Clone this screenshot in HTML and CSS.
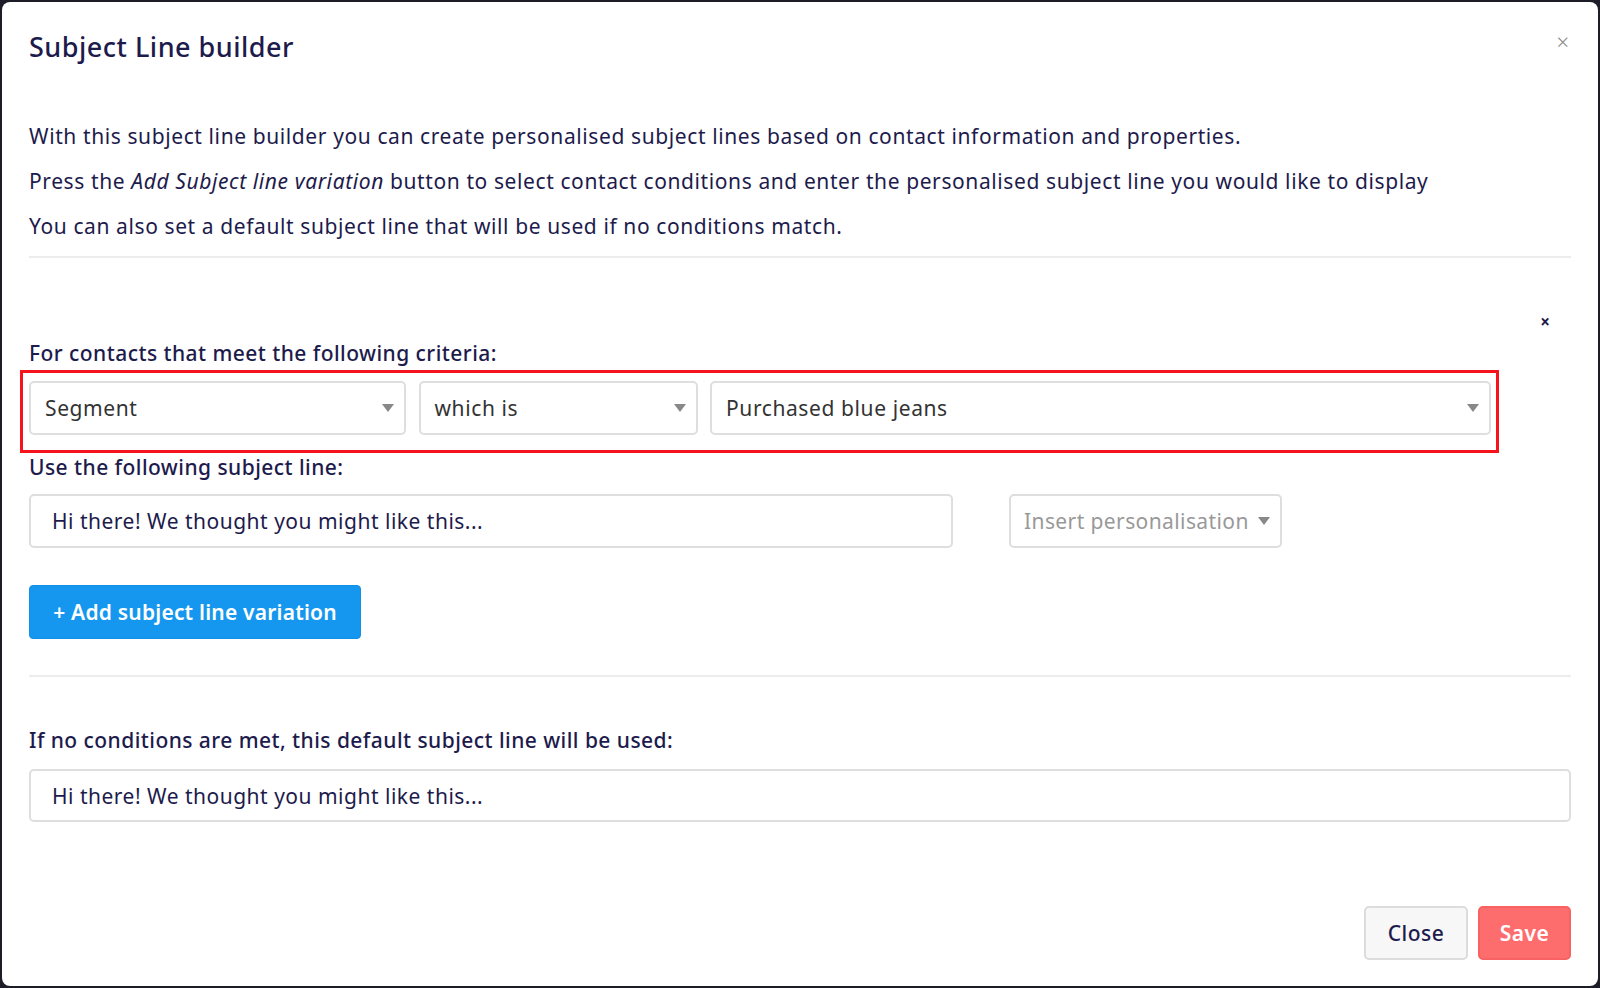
FILE: index.html
```html
<!DOCTYPE html>
<html lang="en">
  <head>
    <meta charset="UTF-8" />
    <meta name="viewport" content="width=device-width, initial-scale=1.0" />
    <title>Subject Line builder</title>
    <link rel="stylesheet" href="styles.css">
  </head>
  <body>
    <div class="modal">
      <div class="modal-header">
        <h1 class="modal-title">Subject Line builder</h1>
        <span class="modal-close">&times;</span>
      </div>

      <div class="intro">
        <p>With this subject line builder you can create personalised subject lines based on contact information and properties.</p>
        <p>Press the <em>Add Subject line variation</em> button to select contact conditions and enter the personalised subject line you would like to display</p>
        <p>You can also set a default subject line that will be used if no conditions match.</p>
      </div>

      <hr class="divider">

      <!-- variation block -->
      <div class="variation">
        <div class="remove-row"><span class="remove">&times;</span></div>
        <div class="label label-criteria">For contacts that meet the following criteria:</div>
        <div class="highlight">
          <div class="criteria">
            <div class="select"><span>Segment</span><i class="caret"></i></div>
            <div class="select"><span>which is</span><i class="caret"></i></div>
            <div class="select"><span>Purchased blue jeans</span><i class="caret"></i></div>
          </div>
        </div>
        <div class="label label-subject">Use the following subject line:</div>
        <div class="subject-row">
          <div class="input">Hi there! We thought you might like this...</div>
          <div class="select select-personal"><span>Insert personalisation</span><i class="caret"></i></div>
        </div>
      </div>

      <button class="btn-add">+ Add subject line variation</button>

      <hr class="divider divider-bottom">

      <div class="label label-default">If no conditions are met, this default subject line will be used:</div>
      <div class="input input-default">Hi there! We thought you might like this...</div>

      <div class="modal-footer">
        <button class="btn btn-close">Close</button>
        <button class="btn btn-save">Save</button>
      </div>
    </div>
  </body>
</html>
```

FILE: styles.css
```css
html, body {
  margin: 0;
  height: 100%;
}

body {
  background: #1d1d28;
  font-family: "Noto Sans", "Open Sans", sans-serif;
  color: #1d1b4c;
  padding: 2px;
  box-sizing: border-box;
  overflow: hidden;
}

.modal {
  background: #fff;
  border-radius: 8px;
  height: 984px;
  width: 1596px;
  box-sizing: border-box;
  padding: 29px 27px 0 27px;
}

.modal-header {
  display: flex;
  justify-content: space-between;
  align-items: flex-start;
}

.modal-title {
  margin: 0;
  font-size: 27px;
  line-height: 32px;
  font-weight: 500;
  letter-spacing: 0.5px;
}

.modal-close {
  color: #8a8a8a;
  font-size: 22px;
  line-height: 22px;
  margin-top: -1px;
  margin-right: 2px;
  font-weight: 300;
}

.intro {
  margin-top: 61px;
}

.intro p {
  margin: 0 0 21px;
  font-size: 21px;
  line-height: 24px;
  font-weight: 400;
  letter-spacing: 0.6px;
}

.intro p:last-child {
  margin-bottom: 0;
}

.divider {
  border: 0;
  border-top: 2px solid #ececec;
  margin: 18px 0 0;
}

.remove-row {
  display: flex;
  justify-content: flex-end;
  padding-right: 21px;
  margin-top: 56px;
  height: 16px;
}

.remove {
  font-size: 17px;
  line-height: 16px;
  font-weight: 700;
  color: #1d1b4c;
}

.label {
  font-size: 21px;
  line-height: 24px;
  font-weight: 500;
  letter-spacing: 0.45px;
}

.label-criteria {
  margin-top: 11px;
}

.highlight {
  margin: 5px 0 0 -9px;
  width: 1479px;
  box-sizing: border-box;
  border: 3px solid #f5141b;
  padding: 8px 5px 15px 6px;
}

.criteria {
  display: grid;
  grid-template-columns: 377px 279px 1fr;
  gap: 12.5px;
}

.select {
  height: 54px;
  box-sizing: border-box;
  border: 2px solid #dedede;
  border-radius: 5px;
  display: flex;
  align-items: center;
  justify-content: space-between;
  padding: 0 10px 0 14px;
  font-size: 21px;
  letter-spacing: 0.6px;
  color: #333;
}

.caret {
  width: 0;
  height: 0;
  border-left: 6.5px solid transparent;
  border-right: 6.5px solid transparent;
  border-top: 8px solid #888;
}

.label-subject {
  margin-top: 2px;
}

.subject-row {
  display: flex;
  gap: 56px;
  margin-top: 15px;
}

.input {
  height: 54px;
  box-sizing: border-box;
  border: 2px solid #dedede;
  border-radius: 5px;
  display: flex;
  align-items: center;
  padding-left: 21px;
  font-size: 21px;
  letter-spacing: 0.5px;
  color: #1d1b4c;
}

.subject-row .input {
  width: 924px;
}

.select-personal {
  width: 273px;
  height: 54px;
  color: #999;
  letter-spacing: 0.4px;
  padding: 0 10px 0 13px;
}

.btn-add {
  display: block;
  margin-top: 37px;
  width: 332px;
  height: 54px;
  background: #1597ef;
  color: #fff;
  border: 1px solid #1390e6;
  border-radius: 4px;
  font-family: inherit;
  font-size: 21px;
  font-weight: 600;
  letter-spacing: 0.2px;
  cursor: pointer;
}

.divider-bottom {
  margin-top: 36px;
}

.label-default {
  margin-top: 51px;
}

.input-default {
  margin-top: 17px;
  height: 53px;
}

.modal-footer {
  display: flex;
  justify-content: flex-end;
  gap: 10px;
  margin-top: 84px;
}

.btn {
  height: 54px;
  border-radius: 5px;
  font-family: inherit;
  font-size: 21px;
  letter-spacing: 0.5px;
  cursor: pointer;
}

.btn-close {
  width: 104px;
  background: #f7f7f8;
  border: 2px solid #dcdcdc;
  color: #1d1b4c;
  font-weight: 500;
}

.btn-save {
  width: 93px;
  background: #fe6d6d;
  border: 2px solid #f86262;
  color: #fff;
  font-weight: 600;
}
```
